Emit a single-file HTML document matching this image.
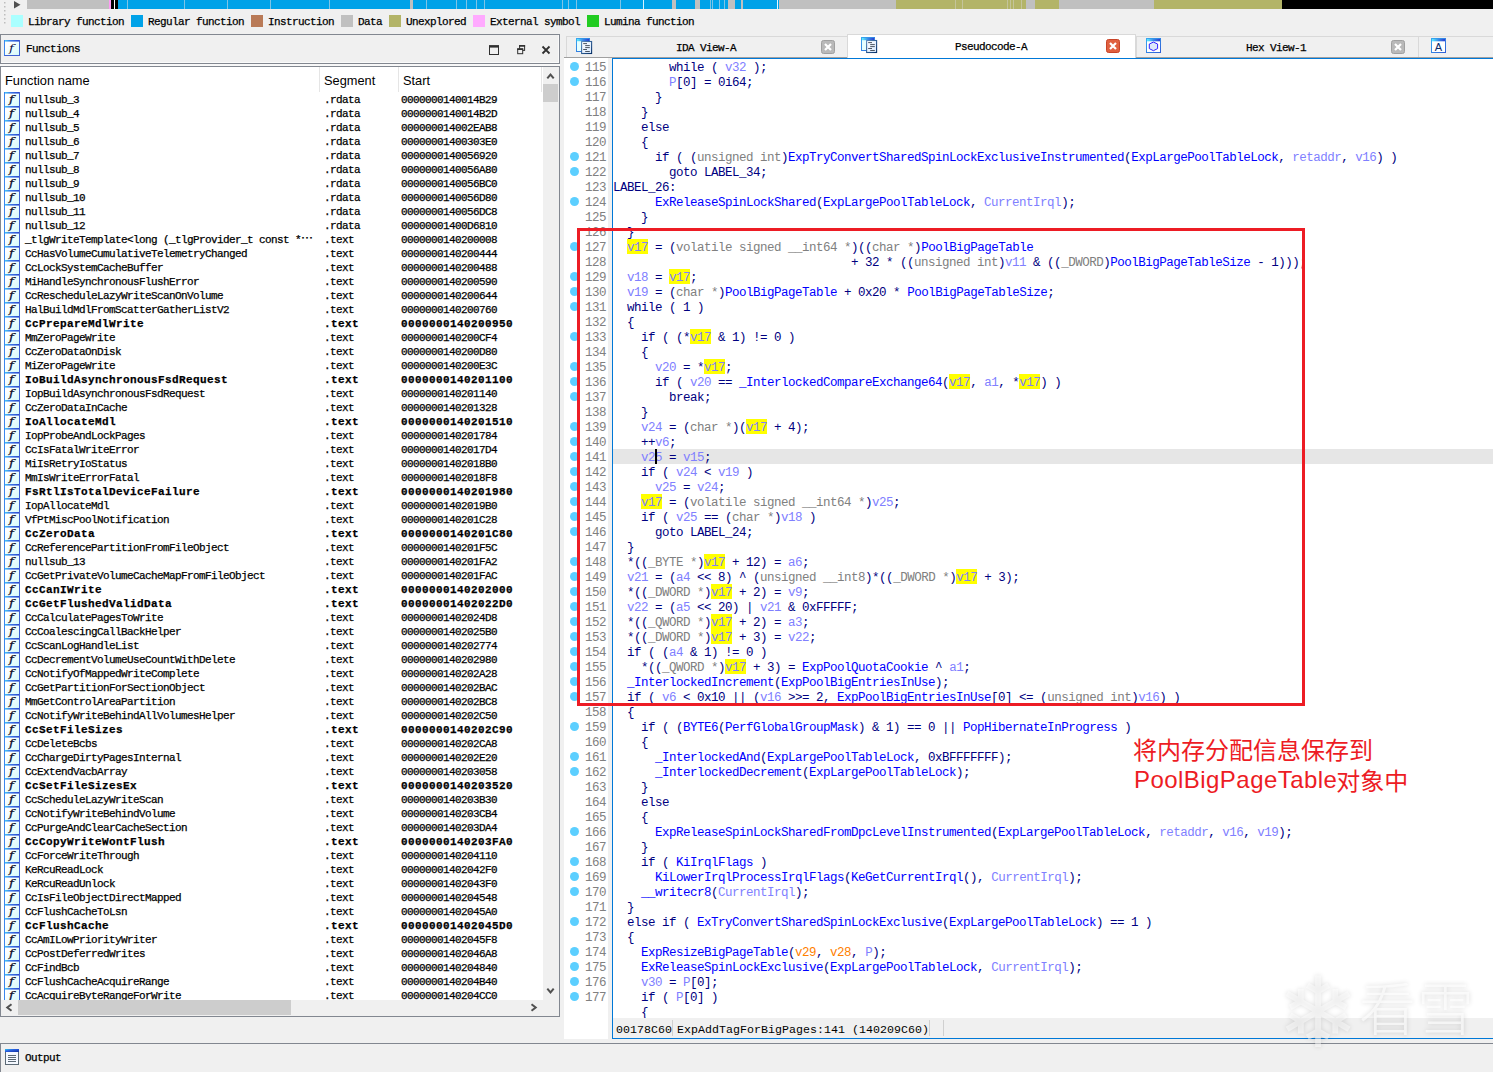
<!DOCTYPE html>
<html><head><meta charset="utf-8"><title>IDA</title>
<style>
*{box-sizing:border-box;margin:0;padding:0}
html,body{width:1493px;height:1072px;overflow:hidden;background:#f0f0f0}
body{position:relative;font-family:"Liberation Mono","Noto Sans CJK SC",monospace;color:#000}
.abs{position:absolute}
.ss{-webkit-text-stroke:0.25px #000;font-family:"Liberation Mono","Noto Sans CJK SC",monospace;font-size:11px;letter-spacing:-0.6px;white-space:pre;line-height:14px}
.ssb{font-weight:bold;letter-spacing:0.4px}
/* nav band */
#nav{left:0;top:0;width:1493px;height:9px}
#nav i{position:absolute;top:0;height:9px;display:block}
/* legend */
.lg{top:15px;width:12px;height:12px}
.lt{top:15px;height:14px}
/* functions panel */
#ftitle{left:0;top:34px;width:560px;height:30px;border:1px solid #828790;background:#f0f0f0;box-shadow:inset -1px -1px 0 #fafafa}
#flist{left:0;top:66px;width:560px;height:951px;border:1px solid #828790;background:#fff;overflow:hidden}
.hd{font-family:"Liberation Sans",sans-serif;font-size:12.8px;top:73px;line-height:15px;color:#000;white-space:pre}
.row{position:absolute;left:0;width:541px;height:14px}
.row b,.row u,.row s{position:absolute;top:1px;font-weight:inherit;text-decoration:none}
.row b{left:25px}.row u{left:324px}.row s{left:401px}
.fi{position:absolute;left:4px;top:0;width:16px;height:14px;border-left:1px solid #3c86ee;border-right:1px solid #3f60d2;padding-top:2px;background:linear-gradient(90deg,#48c8f8,#3a78e8 40%,#2c48cc) 0 0/100% 1.6px no-repeat,linear-gradient(135deg,#ffffff 25%,#d4fafa 100%);overflow:hidden}
.fi em{position:absolute;left:4.3px;top:1px;font-family:"DejaVu Serif","Liberation Serif",serif;font-style:italic;font-size:10.5px;line-height:12px;color:#0a0a3c;letter-spacing:0;font-weight:normal;transform:scaleX(1.25);transform-origin:0 0}
/* code */
#gut{left:564px;top:58px;width:44px;height:981px;background:#fff}
#gstrip{left:608px;top:58px;width:4px;height:960px;background:#f0f0f0}
#code{left:612px;top:58px;width:881px;height:981px;border-left:1px solid #0078d7;border-top:1px solid #0078d7;border-bottom:1px solid #0078d7;background:#fff;overflow:hidden;z-index:0}
.cl{position:absolute;z-index:1;left:0;height:15px;width:881px;font-size:12.5px;letter-spacing:-0.5px;line-height:15px;white-space:pre;color:#000080}
.ln{position:absolute;left:585px;width:24px;height:15px;font-size:12.5px;letter-spacing:-0.5px;line-height:15px;color:#808080;white-space:pre}
.dot{position:absolute;left:570px;width:9px;height:9px;border-radius:50%;background:#5ccfff}
.v{color:#8080ff}.g{color:#0000ff}.t{color:#808080}.o{color:#ff8000}
.h{color:#8080ff;position:relative}.h::before{content:'';position:absolute;left:0;right:0;top:-2px;height:15px;background:#ffff00;z-index:-1}
#status{left:613px;top:1018px;width:880px;height:20px;background:#f0f0f0}
.st{position:absolute;top:1023px;font-size:11.6px;letter-spacing:0.04px;line-height:14px;white-space:pre;color:#000}
/* tabs */
.tab{top:36px;height:21px;border:1px solid #d9d9d9;border-bottom:none;background:#f0f0f0}
.tabt{position:absolute;top:41px;line-height:14px}
.cb{position:absolute;width:14px;height:14px;border-radius:2px}
</style></head><body>

<div id="nav" class="abs">
<i style="left:27px;width:82px;background:#c0c0c0"></i>
<i style="left:109px;width:1.5px;background:#ff9cf4"></i>
<i style="left:110.5px;width:0.5px;background:#fff"></i>
<i style="left:111px;width:3px;background:#000"></i>
<i style="left:114px;width:1px;background:#fff"></i>
<i style="left:115px;width:3px;background:#000"></i>
<i style="left:118px;width:661px;background:#00a2e8"></i>
<i style="left:779px;width:117px;background:#c0c0c0"></i>
<i style="left:896px;width:130px;background:#b3b468"></i>
<i style="left:1026px;width:9px;background:#c0c0c0"></i>
<i style="left:1035px;width:24px;background:#b3b468"></i>
<i style="left:1059px;width:95px;background:#c0c0c0"></i>
<i style="left:1154px;width:128px;background:#b3b468"></i>
<i style="left:1282px;width:211px;background:#000"></i>
<i style="left:127px;width:1px;background:#7fc4e6"></i>
<i style="left:184px;width:1px;background:#7fc4e6"></i>
<i style="left:227px;width:1px;background:#7fc4e6"></i>
<i style="left:270px;width:1px;background:#7fc4e6"></i>
<i style="left:329px;width:1px;background:#7fc4e6"></i>
<i style="left:425.5px;width:1px;background:#7fc4e6"></i>
<i style="left:456px;width:1px;background:#7fc4e6"></i>
<i style="left:466px;width:1px;background:#7fc4e6"></i>
<i style="left:475.5px;width:1px;background:#7fc4e6"></i>
<i style="left:483.5px;width:1px;background:#7fc4e6"></i>
<i style="left:561.5px;width:1px;background:#7fc4e6"></i>
<i style="left:568px;width:1px;background:#7fc4e6"></i>
<i style="left:576px;width:1px;background:#7fc4e6"></i>
<i style="left:620px;width:1px;background:#7fc4e6"></i>
<i style="left:709.5px;width:1px;background:#7fc4e6"></i>
<i style="left:712px;width:1px;background:#7fc4e6"></i>
<i style="left:719px;width:1px;background:#7fc4e6"></i>
<i style="left:724px;width:1px;background:#7fc4e6"></i>
<i style="left:643px;width:1px;background:#d8f2ff"></i>
<i style="left:777px;width:1px;background:#e8f6ff"></i>
<i style="left:410px;width:3px;background:#c0c0c0"></i>
<i style="left:672px;width:4px;background:#c0c0c0"></i>
<i style="left:695px;width:4.5px;background:#c0c0c0"></i>
<i style="left:728px;width:7px;background:#c0c0c0"></i>
<i style="left:741px;width:2px;background:#c0c0c0"></i>
<i style="left:955px;width:1px;background:#c4c49a"></i>
<i style="left:962px;width:1px;background:#c4c49a"></i>
<i style="left:1007px;width:1px;background:#c4c49a"></i>
<i style="left:1010px;width:1px;background:#c4c49a"></i>
<i style="left:1013px;width:1px;background:#c4c49a"></i>
<i style="left:1021px;width:1px;background:#c4c49a"></i>
</div>
<svg class="abs" style="left:0;top:0" width="27" height="32"><polygon points="14,1 14,8.5 20.5,4.75" fill="#505050"/><g fill="#bdbdbd"><rect x="4" y="2" width="1.5" height="1.5"/><rect x="4" y="6" width="1.5" height="1.5"/><rect x="4" y="10" width="1.5" height="1.5"/><rect x="4" y="14" width="1.5" height="1.5"/><rect x="4" y="18" width="1.5" height="1.5"/><rect x="4" y="22" width="1.5" height="1.5"/></g></svg>
<div class="abs lg" style="left:11px;background:#aaffff"></div><div class="abs lt ss" style="left:28px">Library function</div>
<div class="abs lg" style="left:131px;background:#00a2e8"></div><div class="abs lt ss" style="left:148px">Regular function</div>
<div class="abs lg" style="left:251px;background:#b97a57"></div><div class="abs lt ss" style="left:268px">Instruction</div>
<div class="abs lg" style="left:341px;background:#c0c0c0"></div><div class="abs lt ss" style="left:358px">Data</div>
<div class="abs lg" style="left:389px;background:#b3b468"></div><div class="abs lt ss" style="left:406px">Unexplored</div>
<div class="abs lg" style="left:473px;background:#ffaaff"></div><div class="abs lt ss" style="left:490px">External symbol</div>
<div class="abs lg" style="left:587px;background:#22cc22"></div><div class="abs lt ss" style="left:604px">Lumina function</div>
<div id="ftitle" class="abs"></div>
<div class="abs fi" style="left:4px;top:40px;height:16px;border-bottom:1px solid #3f60d2"><em style="top:2px">f</em></div>
<div class="abs ss" style="left:26px;top:42px">Functions</div>
<svg class="abs" style="left:486px;top:42px" width="70" height="16" fill="none" stroke="#303030"><rect x="3.5" y="4" width="9" height="8.5" stroke-width="1"/><rect x="3" y="3.2" width="10" height="2.4" fill="#303030" stroke="none"/><rect x="33.6" y="3.6" width="5" height="4.8" stroke-width="1"/><rect x="33.1" y="3.1" width="6" height="1.6" fill="#303030" stroke="none"/><rect x="31.7" y="6.9" width="5" height="4.8" stroke-width="1" fill="#f0f0f0"/><rect x="31.2" y="6.4" width="6" height="1.6" fill="#303030" stroke="none"/><path d="M56.5 4.5L63.5 11.5M63.5 4.5L56.5 11.5" stroke-width="1.8"/></svg>
<div id="flist" class="abs">
</div>
<div class="abs hd" style="left:5px">Function name</div><div class="abs hd" style="left:324px">Segment</div><div class="abs hd" style="left:403px">Start</div>
<div class="abs" style="left:319px;top:67px;width:1px;height:25px;background:#e5e5e5"></div><div class="abs" style="left:398px;top:67px;width:1px;height:25px;background:#e5e5e5"></div><div class="abs" style="left:541px;top:67px;width:1px;height:25px;background:#e5e5e5"></div>
<div class="abs" style="left:0;top:92px;width:542px;height:908px;overflow:hidden">
<div class="row ss" style="top:0px"><span class="fi"><em>f</em></span><b>nullsub_3</b><u>.rdata</u><s>0000000140014B29</s></div>
<div class="row ss" style="top:14px"><span class="fi"><em>f</em></span><b>nullsub_4</b><u>.rdata</u><s>0000000140014B2D</s></div>
<div class="row ss" style="top:28px"><span class="fi"><em>f</em></span><b>nullsub_5</b><u>.rdata</u><s>000000014002EAB8</s></div>
<div class="row ss" style="top:42px"><span class="fi"><em>f</em></span><b>nullsub_6</b><u>.rdata</u><s>00000001400303E0</s></div>
<div class="row ss" style="top:56px"><span class="fi"><em>f</em></span><b>nullsub_7</b><u>.rdata</u><s>0000000140056920</s></div>
<div class="row ss" style="top:70px"><span class="fi"><em>f</em></span><b>nullsub_8</b><u>.rdata</u><s>0000000140056A80</s></div>
<div class="row ss" style="top:84px"><span class="fi"><em>f</em></span><b>nullsub_9</b><u>.rdata</u><s>0000000140056BC0</s></div>
<div class="row ss" style="top:98px"><span class="fi"><em>f</em></span><b>nullsub_10</b><u>.rdata</u><s>0000000140056D80</s></div>
<div class="row ss" style="top:112px"><span class="fi"><em>f</em></span><b>nullsub_11</b><u>.rdata</u><s>0000000140056DC8</s></div>
<div class="row ss" style="top:126px"><span class="fi"><em>f</em></span><b>nullsub_12</b><u>.rdata</u><s>00000001400D6810</s></div>
<div class="row ss" style="top:140px"><span class="fi"><em>f</em></span><b>_tlgWriteTemplate&lt;long (_tlgProvider_t const *<span lang="zh-CN" style="font-family:'Noto Sans CJK SC',sans-serif;font-size:12px;letter-spacing:0;line-height:0">…</span></b><u>.text</u><s>0000000140200008</s></div>
<div class="row ss" style="top:154px"><span class="fi"><em>f</em></span><b>CcHasVolumeCumulativeTelemetryChanged</b><u>.text</u><s>0000000140200444</s></div>
<div class="row ss" style="top:168px"><span class="fi"><em>f</em></span><b>CcLockSystemCacheBuffer</b><u>.text</u><s>0000000140200488</s></div>
<div class="row ss" style="top:182px"><span class="fi"><em>f</em></span><b>MiHandleSynchronousFlushError</b><u>.text</u><s>0000000140200590</s></div>
<div class="row ss" style="top:196px"><span class="fi"><em>f</em></span><b>CcRescheduleLazyWriteScanOnVolume</b><u>.text</u><s>0000000140200644</s></div>
<div class="row ss" style="top:210px"><span class="fi"><em>f</em></span><b>HalBuildMdlFromScatterGatherListV2</b><u>.text</u><s>0000000140200760</s></div>
<div class="row ss ssb" style="top:224px"><span class="fi"><em>f</em></span><b>CcPrepareMdlWrite</b><u>.text</u><s>0000000140200950</s></div>
<div class="row ss" style="top:238px"><span class="fi"><em>f</em></span><b>MmZeroPageWrite</b><u>.text</u><s>0000000140200CF4</s></div>
<div class="row ss" style="top:252px"><span class="fi"><em>f</em></span><b>CcZeroDataOnDisk</b><u>.text</u><s>0000000140200D80</s></div>
<div class="row ss" style="top:266px"><span class="fi"><em>f</em></span><b>MiZeroPageWrite</b><u>.text</u><s>0000000140200E3C</s></div>
<div class="row ss ssb" style="top:280px"><span class="fi"><em>f</em></span><b>IoBuildAsynchronousFsdRequest</b><u>.text</u><s>0000000140201100</s></div>
<div class="row ss" style="top:294px"><span class="fi"><em>f</em></span><b>IopBuildAsynchronousFsdRequest</b><u>.text</u><s>0000000140201140</s></div>
<div class="row ss" style="top:308px"><span class="fi"><em>f</em></span><b>CcZeroDataInCache</b><u>.text</u><s>0000000140201328</s></div>
<div class="row ss ssb" style="top:322px"><span class="fi"><em>f</em></span><b>IoAllocateMdl</b><u>.text</u><s>0000000140201510</s></div>
<div class="row ss" style="top:336px"><span class="fi"><em>f</em></span><b>IopProbeAndLockPages</b><u>.text</u><s>0000000140201784</s></div>
<div class="row ss" style="top:350px"><span class="fi"><em>f</em></span><b>CcIsFatalWriteError</b><u>.text</u><s>00000001402017D4</s></div>
<div class="row ss" style="top:364px"><span class="fi"><em>f</em></span><b>MiIsRetryIoStatus</b><u>.text</u><s>00000001402018B0</s></div>
<div class="row ss" style="top:378px"><span class="fi"><em>f</em></span><b>MmIsWriteErrorFatal</b><u>.text</u><s>00000001402018F8</s></div>
<div class="row ss ssb" style="top:392px"><span class="fi"><em>f</em></span><b>FsRtlIsTotalDeviceFailure</b><u>.text</u><s>0000000140201980</s></div>
<div class="row ss" style="top:406px"><span class="fi"><em>f</em></span><b>IopAllocateMdl</b><u>.text</u><s>00000001402019B0</s></div>
<div class="row ss" style="top:420px"><span class="fi"><em>f</em></span><b>VfPtMiscPoolNotification</b><u>.text</u><s>0000000140201C28</s></div>
<div class="row ss ssb" style="top:434px"><span class="fi"><em>f</em></span><b>CcZeroData</b><u>.text</u><s>0000000140201C80</s></div>
<div class="row ss" style="top:448px"><span class="fi"><em>f</em></span><b>CcReferencePartitionFromFileObject</b><u>.text</u><s>0000000140201F5C</s></div>
<div class="row ss" style="top:462px"><span class="fi"><em>f</em></span><b>nullsub_13</b><u>.text</u><s>0000000140201FA2</s></div>
<div class="row ss" style="top:476px"><span class="fi"><em>f</em></span><b>CcGetPrivateVolumeCacheMapFromFileObject</b><u>.text</u><s>0000000140201FAC</s></div>
<div class="row ss ssb" style="top:490px"><span class="fi"><em>f</em></span><b>CcCanIWrite</b><u>.text</u><s>0000000140202000</s></div>
<div class="row ss ssb" style="top:504px"><span class="fi"><em>f</em></span><b>CcGetFlushedValidData</b><u>.text</u><s>00000001402022D0</s></div>
<div class="row ss" style="top:518px"><span class="fi"><em>f</em></span><b>CcCalculatePagesToWrite</b><u>.text</u><s>00000001402024D8</s></div>
<div class="row ss" style="top:532px"><span class="fi"><em>f</em></span><b>CcCoalescingCallBackHelper</b><u>.text</u><s>00000001402025B0</s></div>
<div class="row ss" style="top:546px"><span class="fi"><em>f</em></span><b>CcScanLogHandleList</b><u>.text</u><s>0000000140202774</s></div>
<div class="row ss" style="top:560px"><span class="fi"><em>f</em></span><b>CcDecrementVolumeUseCountWithDelete</b><u>.text</u><s>0000000140202980</s></div>
<div class="row ss" style="top:574px"><span class="fi"><em>f</em></span><b>CcNotifyOfMappedWriteComplete</b><u>.text</u><s>0000000140202A28</s></div>
<div class="row ss" style="top:588px"><span class="fi"><em>f</em></span><b>CcGetPartitionForSectionObject</b><u>.text</u><s>0000000140202BAC</s></div>
<div class="row ss" style="top:602px"><span class="fi"><em>f</em></span><b>MmGetControlAreaPartition</b><u>.text</u><s>0000000140202BC8</s></div>
<div class="row ss" style="top:616px"><span class="fi"><em>f</em></span><b>CcNotifyWriteBehindAllVolumesHelper</b><u>.text</u><s>0000000140202C50</s></div>
<div class="row ss ssb" style="top:630px"><span class="fi"><em>f</em></span><b>CcSetFileSizes</b><u>.text</u><s>0000000140202C90</s></div>
<div class="row ss" style="top:644px"><span class="fi"><em>f</em></span><b>CcDeleteBcbs</b><u>.text</u><s>0000000140202CA8</s></div>
<div class="row ss" style="top:658px"><span class="fi"><em>f</em></span><b>CcChargeDirtyPagesInternal</b><u>.text</u><s>0000000140202E20</s></div>
<div class="row ss" style="top:672px"><span class="fi"><em>f</em></span><b>CcExtendVacbArray</b><u>.text</u><s>0000000140203058</s></div>
<div class="row ss ssb" style="top:686px"><span class="fi"><em>f</em></span><b>CcSetFileSizesEx</b><u>.text</u><s>0000000140203520</s></div>
<div class="row ss" style="top:700px"><span class="fi"><em>f</em></span><b>CcScheduleLazyWriteScan</b><u>.text</u><s>0000000140203B30</s></div>
<div class="row ss" style="top:714px"><span class="fi"><em>f</em></span><b>CcNotifyWriteBehindVolume</b><u>.text</u><s>0000000140203CB4</s></div>
<div class="row ss" style="top:728px"><span class="fi"><em>f</em></span><b>CcPurgeAndClearCacheSection</b><u>.text</u><s>0000000140203DA4</s></div>
<div class="row ss ssb" style="top:742px"><span class="fi"><em>f</em></span><b>CcCopyWriteWontFlush</b><u>.text</u><s>0000000140203FA0</s></div>
<div class="row ss" style="top:756px"><span class="fi"><em>f</em></span><b>CcForceWriteThrough</b><u>.text</u><s>0000000140204110</s></div>
<div class="row ss" style="top:770px"><span class="fi"><em>f</em></span><b>KeRcuReadLock</b><u>.text</u><s>00000001402042F0</s></div>
<div class="row ss" style="top:784px"><span class="fi"><em>f</em></span><b>KeRcuReadUnlock</b><u>.text</u><s>00000001402043F0</s></div>
<div class="row ss" style="top:798px"><span class="fi"><em>f</em></span><b>CcIsFileObjectDirectMapped</b><u>.text</u><s>0000000140204548</s></div>
<div class="row ss" style="top:812px"><span class="fi"><em>f</em></span><b>CcFlushCacheToLsn</b><u>.text</u><s>00000001402045A0</s></div>
<div class="row ss ssb" style="top:826px"><span class="fi"><em>f</em></span><b>CcFlushCache</b><u>.text</u><s>00000001402045D0</s></div>
<div class="row ss" style="top:840px"><span class="fi"><em>f</em></span><b>CcAmILowPriorityWriter</b><u>.text</u><s>00000001402045F8</s></div>
<div class="row ss" style="top:854px"><span class="fi"><em>f</em></span><b>CcPostDeferredWrites</b><u>.text</u><s>00000001402046A8</s></div>
<div class="row ss" style="top:868px"><span class="fi"><em>f</em></span><b>CcFindBcb</b><u>.text</u><s>0000000140204840</s></div>
<div class="row ss" style="top:882px"><span class="fi"><em>f</em></span><b>CcFlushCacheAcquireRange</b><u>.text</u><s>0000000140204B40</s></div>
<div class="row ss" style="top:896px"><span class="fi"><em>f</em></span><b>CcAcquireByteRangeForWrite</b><u>.text</u><s>0000000140204CC0</s></div>
</div>
<div class="abs" style="left:543px;top:67px;width:16px;height:949px;background:#f0f0f0"></div>
<div class="abs" style="left:543px;top:84px;width:15px;height:18px;background:#cdcdcd"></div>
<svg class="abs" style="left:543px;top:67px" width="16" height="949" fill="none" stroke="#505050" stroke-width="2"><path d="M4.3 11.3L7.5 7.6L10.7 11.3"/><path d="M4.3 921.7L7.5 925.4L10.7 921.7"/></svg>
<div class="abs" style="left:1px;top:1000px;width:558px;height:16px;background:#f0f0f0"></div>
<div class="abs" style="left:18px;top:1000px;width:273px;height:15px;background:#cdcdcd"></div>
<svg class="abs" style="left:0px;top:1000px" width="559" height="16" fill="none" stroke="#505050" stroke-width="2"><path d="M11.5 4.3L7.3 7.5L11.5 10.7"/><path d="M531.5 4.3L535.7 7.5L531.5 10.7"/></svg>
<div class="abs" style="left:0;top:64px;width:560px;height:2px;background:#f8f8f8"></div>
<div class="abs" style="left:0;top:1043px;width:1493px;height:29px;border-top:1px solid #828790;border-left:1px solid #828790;background:#f0f0f0"></div>
<svg class="abs" style="left:5px;top:1049px" width="15" height="17"><defs><linearGradient id="go" x1="0" y1="0" x2="1" y2="1"><stop offset="0" stop-color="#30c8e8"/><stop offset="0.4" stop-color="#2a60e0"/><stop offset="1" stop-color="#1030a0"/></linearGradient></defs><rect x="0.5" y="0.5" width="13" height="15" fill="#f4f8ff" stroke="#5c6a76"/><rect x="0" y="0" width="14" height="3" fill="url(#go)"/><path d="M3 6.5H11M3 8.5H11M3 10.5H11M3 12.5H11" stroke="#4a5864" stroke-width="0.9"/></svg>
<div class="abs ss" style="left:25px;top:1051px">Output</div>
<div class="abs" style="left:564px;top:57px;width:929px;height:1px;background:#a0a0a0"></div>
<div class="abs tab" style="left:566px;width:282px"></div>
<div class="abs tab" style="left:1136px;width:283px"></div>
<div class="abs tab" style="left:1418px;width:85px"></div>
<div class="abs tab" style="left:847px;width:289px;top:34px;height:25px;background:#fff"></div>
<div class="abs" style="left:564px;top:58px;width:929px;height:1px;background:#0078d7"></div>
<div class="tabt ss" style="left:676px">IDA View-A</div>
<div class="tabt ss" style="left:955px;top:40px">Pseudocode-A</div>
<div class="tabt ss" style="left:1246px">Hex View-1</div>
<svg class="abs" style="left:821px;top:40px" width="14" height="14"><rect x="0.5" y="0.5" width="13" height="13" rx="2" fill="#b9b9b9" stroke="#a0a0a0"/><path d="M4 4L10 10M10 4L4 10" stroke="#fff" stroke-width="2.2"/></svg>
<svg class="abs" style="left:1106px;top:39px" width="14" height="14"><rect x="0.5" y="0.5" width="13" height="13" rx="2" fill="#e0603f" stroke="#c84428"/><path d="M4 4L10 10M10 4L4 10" stroke="#fff" stroke-width="2.2"/></svg>
<svg class="abs" style="left:1391px;top:40px" width="14" height="14"><rect x="0.5" y="0.5" width="13" height="13" rx="2" fill="#b9b9b9" stroke="#a0a0a0"/><path d="M4 4L10 10M10 4L4 10" stroke="#fff" stroke-width="2.2"/></svg>
<svg width="0" height="0" style="position:absolute"><defs><linearGradient id="gb" x1="0" y1="0" x2="1" y2="0"><stop offset="0" stop-color="#5ff0ff"/><stop offset="0.5" stop-color="#3a8ae8"/><stop offset="1" stop-color="#2a3ed0"/></linearGradient><linearGradient id="gs" x1="0" y1="0" x2="1" y2="1"><stop offset="0" stop-color="#38a8f0"/><stop offset="1" stop-color="#2f5fd6"/></linearGradient><linearGradient id="gf" x1="0" y1="0" x2="1" y2="1"><stop offset="0" stop-color="#5b8cc0"/><stop offset="1" stop-color="#062f66"/></linearGradient><linearGradient id="gw" x1="0" y1="0" x2="1" y2="1"><stop offset="0" stop-color="#ffffff"/><stop offset="1" stop-color="#d6e8ff"/></linearGradient></defs></svg>
<svg class="abs" style="left:576px;top:38px" width="17" height="17"><rect x="0.5" y="0.5" width="13" height="13" fill="#e6ffff" stroke="url(#gs)"/><rect x="1" y="1" width="12" height="2.2" fill="url(#gb)"/><rect x="5.6" y="3.5" width="10" height="12" fill="url(#gw)" stroke="url(#gf)" stroke-width="1.1"/><path d="M7.2 5.6H11M9.2 7.6H13.8M9.2 9.6H13.8M7.2 11.5H11M9.2 13.5H13.8" stroke="#3a4450" stroke-width="0.9"/></svg>
<svg class="abs" style="left:861px;top:37px" width="17" height="17"><rect x="0.5" y="0.5" width="13" height="13" fill="#e6ffff" stroke="url(#gs)"/><rect x="1" y="1" width="12" height="2.2" fill="url(#gb)"/><rect x="5.6" y="3.5" width="10" height="12" fill="url(#gw)" stroke="url(#gf)" stroke-width="1.1"/><path d="M7.2 5.6H11M9.2 7.6H13.8M9.2 9.6H13.8M7.2 11.5H11M9.2 13.5H13.8" stroke="#3a4450" stroke-width="0.9"/></svg>
<svg class="abs" style="left:1146px;top:38px" width="16" height="16"><rect x="0.5" y="0.5" width="14" height="14" fill="#fff" stroke="url(#gs)"/><rect x="1" y="1" width="13" height="2.3" fill="url(#gb)"/><polygon points="7.4,4.1 11.6,6 11.6,10.6 7.4,12.7 3.3,10.6 3.3,6" fill="#dce8fb" stroke="#3020ff" stroke-width="1"/></svg>
<svg class="abs" style="left:1431px;top:38px" width="16" height="16"><rect x="0.5" y="0.5" width="14" height="14" fill="#fff" stroke="url(#gs)"/><rect x="1" y="1" width="13" height="2.3" fill="url(#gb)"/><text x="7.5" y="12.6" text-anchor="middle" font-family="Liberation Sans, sans-serif" font-size="11" fill="#0a2a6a">A</text></svg>
<div id="gut" class="abs"></div><div id="gstrip" class="abs"></div>
<div id="code" class="abs">
<div class="cl" style="top:2px">        while ( <span class="v">v32</span> );</div>
<div class="cl" style="top:17px">        <span class="v">P</span>[0] = 0i64;</div>
<div class="cl" style="top:32px">      }</div>
<div class="cl" style="top:47px">    }</div>
<div class="cl" style="top:62px">    else</div>
<div class="cl" style="top:77px">    {</div>
<div class="cl" style="top:92px">      if ( (<span class="t">unsigned int</span>)<span class="g">ExpTryConvertSharedSpinLockExclusiveInstrumented</span>(<span class="g">ExpLargePoolTableLock</span>, <span class="v">retaddr</span>, <span class="v">v16</span>) )</div>
<div class="cl" style="top:107px">        goto LABEL_34;</div>
<div class="cl" style="top:122px">LABEL_26:</div>
<div class="cl" style="top:137px">      <span class="g">ExReleaseSpinLockShared</span>(<span class="g">ExpLargePoolTableLock</span>, <span class="v">CurrentIrql</span>);</div>
<div class="cl" style="top:152px">    }</div>
<div class="cl" style="top:167px">  }</div>
<div class="cl" style="top:182px">  <span class="h">v17</span> = (<span class="t">volatile signed __int64 *</span>)((<span class="t">char *</span>)<span class="g">PoolBigPageTable</span></div>
<div class="cl" style="top:197px">                                  + 32 * ((<span class="t">unsigned int</span>)<span class="v">v11</span> &amp; ((<span class="t">_DWORD</span>)<span class="g">PoolBigPageTableSize</span> - 1)));</div>
<div class="cl" style="top:212px">  <span class="v">v18</span> = <span class="h">v17</span>;</div>
<div class="cl" style="top:227px">  <span class="v">v19</span> = (<span class="t">char *</span>)<span class="g">PoolBigPageTable</span> + 0x20 * <span class="g">PoolBigPageTableSize</span>;</div>
<div class="cl" style="top:242px">  while ( 1 )</div>
<div class="cl" style="top:257px">  {</div>
<div class="cl" style="top:272px">    if ( (*<span class="h">v17</span> &amp; 1) != 0 )</div>
<div class="cl" style="top:287px">    {</div>
<div class="cl" style="top:302px">      <span class="v">v20</span> = *<span class="h">v17</span>;</div>
<div class="cl" style="top:317px">      if ( <span class="v">v20</span> == <span class="g">_InterlockedCompareExchange64</span>(<span class="h">v17</span>, <span class="v">a1</span>, *<span class="h">v17</span>) )</div>
<div class="cl" style="top:332px">        break;</div>
<div class="cl" style="top:347px">    }</div>
<div class="cl" style="top:362px">    <span class="v">v24</span> = (<span class="t">char *</span>)(<span class="h">v17</span> + 4);</div>
<div class="cl" style="top:377px">    ++<span class="v">v6</span>;</div>
<div class="abs" style="left:0;top:390px;width:881px;height:15px;background:#e6e6e6"></div>
<div class="abs" style="left:42px;top:390px;width:2px;height:15px;background:#000;z-index:3"></div>
<div class="cl" style="top:392px">    <span class="v">v25</span> = <span class="v">v15</span>;</div>
<div class="cl" style="top:407px">    if ( <span class="v">v24</span> &lt; <span class="v">v19</span> )</div>
<div class="cl" style="top:422px">      <span class="v">v25</span> = <span class="v">v24</span>;</div>
<div class="cl" style="top:437px">    <span class="h">v17</span> = (<span class="t">volatile signed __int64 *</span>)<span class="v">v25</span>;</div>
<div class="cl" style="top:452px">    if ( <span class="v">v25</span> == (<span class="t">char *</span>)<span class="v">v18</span> )</div>
<div class="cl" style="top:467px">      goto LABEL_24;</div>
<div class="cl" style="top:482px">  }</div>
<div class="cl" style="top:497px">  *((<span class="t">_BYTE *</span>)<span class="h">v17</span> + 12) = <span class="v">a6</span>;</div>
<div class="cl" style="top:512px">  <span class="v">v21</span> = (<span class="v">a4</span> &lt;&lt; 8) ^ (<span class="t">unsigned __int8</span>)*((<span class="t">_DWORD *</span>)<span class="h">v17</span> + 3);</div>
<div class="cl" style="top:527px">  *((<span class="t">_DWORD *</span>)<span class="h">v17</span> + 2) = <span class="v">v9</span>;</div>
<div class="cl" style="top:542px">  <span class="v">v22</span> = (<span class="v">a5</span> &lt;&lt; 20) | <span class="v">v21</span> &amp; 0xFFFFF;</div>
<div class="cl" style="top:557px">  *((<span class="t">_QWORD *</span>)<span class="h">v17</span> + 2) = <span class="v">a3</span>;</div>
<div class="cl" style="top:572px">  *((<span class="t">_DWORD *</span>)<span class="h">v17</span> + 3) = <span class="v">v22</span>;</div>
<div class="cl" style="top:587px">  if ( (<span class="v">a4</span> &amp; 1) != 0 )</div>
<div class="cl" style="top:602px">    *((<span class="t">_QWORD *</span>)<span class="h">v17</span> + 3) = <span class="g">ExpPoolQuotaCookie</span> ^ <span class="v">a1</span>;</div>
<div class="cl" style="top:617px">  <span class="g">_InterlockedIncrement</span>(<span class="g">ExpPoolBigEntriesInUse</span>);</div>
<div class="cl" style="top:632px">  if ( <span class="v">v6</span> &lt; 0x10 || (<span class="v">v16</span> &gt;&gt;= 2, <span class="g">ExpPoolBigEntriesInUse</span>[0] &lt;= (<span class="t">unsigned int</span>)<span class="v">v16</span>) )</div>
<div class="cl" style="top:647px">  {</div>
<div class="cl" style="top:662px">    if ( (<span class="g">BYTE6</span>(<span class="g">PerfGlobalGroupMask</span>) &amp; 1) == 0 || <span class="g">PopHibernateInProgress</span> )</div>
<div class="cl" style="top:677px">    {</div>
<div class="cl" style="top:692px">      <span class="g">_InterlockedAnd</span>(<span class="g">ExpLargePoolTableLock</span>, 0xBFFFFFFF);</div>
<div class="cl" style="top:707px">      <span class="g">_InterlockedDecrement</span>(<span class="g">ExpLargePoolTableLock</span>);</div>
<div class="cl" style="top:722px">    }</div>
<div class="cl" style="top:737px">    else</div>
<div class="cl" style="top:752px">    {</div>
<div class="cl" style="top:767px">      <span class="g">ExpReleaseSpinLockSharedFromDpcLevelInstrumented</span>(<span class="g">ExpLargePoolTableLock</span>, <span class="v">retaddr</span>, <span class="v">v16</span>, <span class="v">v19</span>);</div>
<div class="cl" style="top:782px">    }</div>
<div class="cl" style="top:797px">    if ( <span class="g">KiIrqlFlags</span> )</div>
<div class="cl" style="top:812px">      <span class="g">KiLowerIrqlProcessIrqlFlags</span>(<span class="g">KeGetCurrentIrql</span>(), <span class="v">CurrentIrql</span>);</div>
<div class="cl" style="top:827px">    <span class="g">__writecr8</span>(<span class="v">CurrentIrql</span>);</div>
<div class="cl" style="top:842px">  }</div>
<div class="cl" style="top:857px">  else if ( <span class="g">ExTryConvertSharedSpinLockExclusive</span>(<span class="g">ExpLargePoolTableLock</span>) == 1 )</div>
<div class="cl" style="top:872px">  {</div>
<div class="cl" style="top:887px">    <span class="g">ExpResizeBigPageTable</span>(<span class="o">v29</span>, <span class="o">v28</span>, <span class="v">P</span>);</div>
<div class="cl" style="top:902px">    <span class="g">ExReleaseSpinLockExclusive</span>(<span class="g">ExpLargePoolTableLock</span>, <span class="v">CurrentIrql</span>);</div>
<div class="cl" style="top:917px">    <span class="v">v30</span> = <span class="v">P</span>[0];</div>
<div class="cl" style="top:932px">    if ( <span class="v">P</span>[0] )</div>
<div class="cl" style="top:947px">    {</div>
</div>
<div class="ln" style="top:61px">115</div>
<div class="dot" style="top:62px"></div>
<div class="ln" style="top:76px">116</div>
<div class="dot" style="top:77px"></div>
<div class="ln" style="top:91px">117</div>
<div class="ln" style="top:106px">118</div>
<div class="ln" style="top:121px">119</div>
<div class="ln" style="top:136px">120</div>
<div class="ln" style="top:151px">121</div>
<div class="dot" style="top:152px"></div>
<div class="ln" style="top:166px">122</div>
<div class="dot" style="top:167px"></div>
<div class="ln" style="top:181px">123</div>
<div class="ln" style="top:196px">124</div>
<div class="dot" style="top:197px"></div>
<div class="ln" style="top:211px">125</div>
<div class="ln" style="top:226px">126</div>
<div class="ln" style="top:241px">127</div>
<div class="dot" style="top:242px"></div>
<div class="ln" style="top:256px">128</div>
<div class="ln" style="top:271px">129</div>
<div class="dot" style="top:272px"></div>
<div class="ln" style="top:286px">130</div>
<div class="dot" style="top:287px"></div>
<div class="ln" style="top:301px">131</div>
<div class="dot" style="top:302px"></div>
<div class="ln" style="top:316px">132</div>
<div class="ln" style="top:331px">133</div>
<div class="dot" style="top:332px"></div>
<div class="ln" style="top:346px">134</div>
<div class="ln" style="top:361px">135</div>
<div class="dot" style="top:362px"></div>
<div class="ln" style="top:376px">136</div>
<div class="dot" style="top:377px"></div>
<div class="ln" style="top:391px">137</div>
<div class="dot" style="top:392px"></div>
<div class="ln" style="top:406px">138</div>
<div class="ln" style="top:421px">139</div>
<div class="dot" style="top:422px"></div>
<div class="ln" style="top:436px">140</div>
<div class="dot" style="top:437px"></div>
<div class="ln" style="top:451px">141</div>
<div class="dot" style="top:452px"></div>
<div class="ln" style="top:466px">142</div>
<div class="dot" style="top:467px"></div>
<div class="ln" style="top:481px">143</div>
<div class="dot" style="top:482px"></div>
<div class="ln" style="top:496px">144</div>
<div class="dot" style="top:497px"></div>
<div class="ln" style="top:511px">145</div>
<div class="dot" style="top:512px"></div>
<div class="ln" style="top:526px">146</div>
<div class="dot" style="top:527px"></div>
<div class="ln" style="top:541px">147</div>
<div class="ln" style="top:556px">148</div>
<div class="dot" style="top:557px"></div>
<div class="ln" style="top:571px">149</div>
<div class="dot" style="top:572px"></div>
<div class="ln" style="top:586px">150</div>
<div class="dot" style="top:587px"></div>
<div class="ln" style="top:601px">151</div>
<div class="dot" style="top:602px"></div>
<div class="ln" style="top:616px">152</div>
<div class="dot" style="top:617px"></div>
<div class="ln" style="top:631px">153</div>
<div class="dot" style="top:632px"></div>
<div class="ln" style="top:646px">154</div>
<div class="dot" style="top:647px"></div>
<div class="ln" style="top:661px">155</div>
<div class="dot" style="top:662px"></div>
<div class="ln" style="top:676px">156</div>
<div class="dot" style="top:677px"></div>
<div class="ln" style="top:691px">157</div>
<div class="dot" style="top:692px"></div>
<div class="ln" style="top:706px">158</div>
<div class="ln" style="top:721px">159</div>
<div class="dot" style="top:722px"></div>
<div class="ln" style="top:736px">160</div>
<div class="ln" style="top:751px">161</div>
<div class="dot" style="top:752px"></div>
<div class="ln" style="top:766px">162</div>
<div class="dot" style="top:767px"></div>
<div class="ln" style="top:781px">163</div>
<div class="ln" style="top:796px">164</div>
<div class="ln" style="top:811px">165</div>
<div class="ln" style="top:826px">166</div>
<div class="dot" style="top:827px"></div>
<div class="ln" style="top:841px">167</div>
<div class="ln" style="top:856px">168</div>
<div class="dot" style="top:857px"></div>
<div class="ln" style="top:871px">169</div>
<div class="dot" style="top:872px"></div>
<div class="ln" style="top:886px">170</div>
<div class="dot" style="top:887px"></div>
<div class="ln" style="top:901px">171</div>
<div class="ln" style="top:916px">172</div>
<div class="dot" style="top:917px"></div>
<div class="ln" style="top:931px">173</div>
<div class="ln" style="top:946px">174</div>
<div class="dot" style="top:947px"></div>
<div class="ln" style="top:961px">175</div>
<div class="dot" style="top:962px"></div>
<div class="ln" style="top:976px">176</div>
<div class="dot" style="top:977px"></div>
<div class="ln" style="top:991px">177</div>
<div class="dot" style="top:992px"></div>
<div id="status" class="abs"></div>
<div class="st" style="left:616px">00178C60</div><div class="st" style="left:677px">ExpAddTagForBigPages:141 (140209C60)</div>
<div class="abs" style="left:672px;top:1020px;width:1px;height:16px;background:#d0d0d0"></div>
<div class="abs" style="left:929px;top:1020px;width:1px;height:16px;background:#d0d0d0"></div>
<div class="abs" style="left:943px;top:1020px;width:1px;height:16px;background:#d0d0d0"></div>
<div class="abs" style="left:577px;top:228px;width:728px;height:478px;border:3px solid #ed1c24"></div>
<div class="abs" style="left:1133px;top:734.5px;font-family:'Liberation Sans','Noto Sans CJK SC',sans-serif;font-size:24px;line-height:31.5px;color:#ed1c24;white-space:pre">将内存分配信息保存到
<span style="position:relative;top:-2px;left:1px;letter-spacing:0.45px">PoolBigPageTable</span>对象中</div>
<div class="abs" style="left:1277px;top:963px;font-family:'DejaVu Sans',sans-serif;font-size:98px;line-height:100px;color:rgba(255,255,255,.5);text-shadow:0 0 5px rgba(0,0,0,.13)">❄</div>
<div class="abs" style="left:1359px;top:972px;font-family:'Liberation Sans','Noto Sans CJK SC',sans-serif;font-weight:300;font-size:57px;line-height:76px;letter-spacing:1px;color:rgba(255,255,255,.65);text-shadow:0 0 5px rgba(0,0,0,.16);white-space:pre">看雪</div>
</body></html>
